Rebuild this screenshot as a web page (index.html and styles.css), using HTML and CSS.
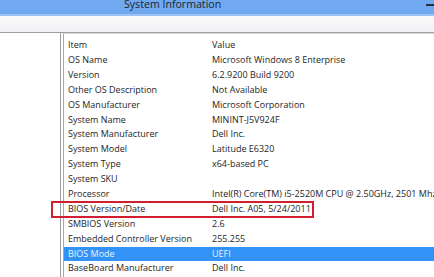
FILE: index.html
```html
<!DOCTYPE html>
<html>
<head>
<meta charset="utf-8">
<link rel="stylesheet" href="styles.css">
</head>
<body>
<div class="window">
  <div class="titlebar">
    <span class="title">System Information</span>
    <svg class="min" width="8" height="15" viewBox="0 0 8 15"><rect x="0" y="4" width="8" height="2" fill="#263040"/></svg>
  </div>
  <div class="menubar"></div>
  <div class="body">
    <div class="tree"></div>
    <div class="list">
      <div class="row head"><span class="c1">Item</span><span class="c2">Value</span></div>
      <div class="row"><span class="c1">OS Name</span><span class="c2">Microsoft Windows 8 Enterprise</span></div>
      <div class="row"><span class="c1">Version</span><span class="c2">6.2.9200 Build 9200</span></div>
      <div class="row"><span class="c1">Other OS Description</span><span class="c2">Not Available</span></div>
      <div class="row"><span class="c1">OS Manufacturer</span><span class="c2">Microsoft Corporation</span></div>
      <div class="row"><span class="c1">System Name</span><span class="c2">MININT-J5V924F</span></div>
      <div class="row"><span class="c1">System Manufacturer</span><span class="c2">Dell Inc.</span></div>
      <div class="row"><span class="c1">System Model</span><span class="c2">Latitude E6320</span></div>
      <div class="row"><span class="c1">System Type</span><span class="c2">x64-based PC</span></div>
      <div class="row"><span class="c1">System SKU</span><span class="c2"></span></div>
      <div class="row"><span class="c1">Processor</span><span class="c2">Intel(R) Core(TM) i5-2520M CPU @ 2.50GHz, 2501 Mhz</span></div>
      <div class="row"><span class="c1">BIOS Version/Date</span><span class="c2">Dell Inc. A05, 5/24/2011</span></div>
      <div class="row"><span class="c1">SMBIOS Version</span><span class="c2">2.6</span></div>
      <div class="row"><span class="c1">Embedded Controller Version</span><span class="c2">255.255</span></div>
      <div class="row sel"><span class="c1">BIOS Mode</span><span class="c2">UEFI</span></div>
      <div class="row"><span class="c1">BaseBoard Manufacturer</span><span class="c2">Dell Inc.</span></div>
    </div>
  </div>
  <div class="highlight"></div>
</div>
</body>
</html>
```
FILE: styles.css
```css
html, body {
  margin: 0;
  padding: 0;
  background: #fff;
}
body {
  font-family: "Open Sans", "Noto Sans", sans-serif;
  color: #1e1e1e;
  overflow: hidden;
  width: 434px;
  height: 277px;
}
.window {
  position: relative;
  width: 434px;
  height: 277px;
  overflow: hidden;
}
.titlebar {
  height: 14px;
  background: #70a9ef;
  border-bottom: 2px solid #9cc3f4;
  display: flex;
  align-items: flex-start;
  overflow: hidden;
}
.title {
  margin-left: 124px;
  font-size: 10.6px;
  line-height: 14px;
  color: #1d2430;
  white-space: nowrap;
  position: relative;
  top: -3px;
}
.min {
  margin-left: auto;
  flex: none;
  display: block;
}
.menubar {
  height: 16px;
  background: linear-gradient(#fbfbfc, #f1f2f4);
  border-bottom: 1px solid #9e9e9e;
}
.body {
  display: flex;
  gap: 2px;
  height: 245px;
}
.tree {
  width: 60px;
  border-right: 1px solid #9c9c9c;
  background: #fff;
}
.list {
  flex: 1;
  border-left: 1px solid #a8a8a8;
  border-top: 1px solid #dcdcdc;
  padding-top: 3px;
  overflow: hidden;
}
.row {
  display: flex;
  height: 14.9px;
  line-height: 14.9px;
  font-size: 9px;
  white-space: nowrap;
}
.row.head {
  height: 16px;
  line-height: 16px;
}
.c1 {
  width: 144px;
  padding-left: 4px;
  flex: none;
}
.c2 {
  flex: none;
}
.row.sel {
  background: #3392f5;
  color: #eaf3ff;
}
.highlight {
  position: absolute;
  left: 51px;
  top: 201px;
  width: 259px;
  height: 13px;
  border: 2px solid #d21f30;
}
```
